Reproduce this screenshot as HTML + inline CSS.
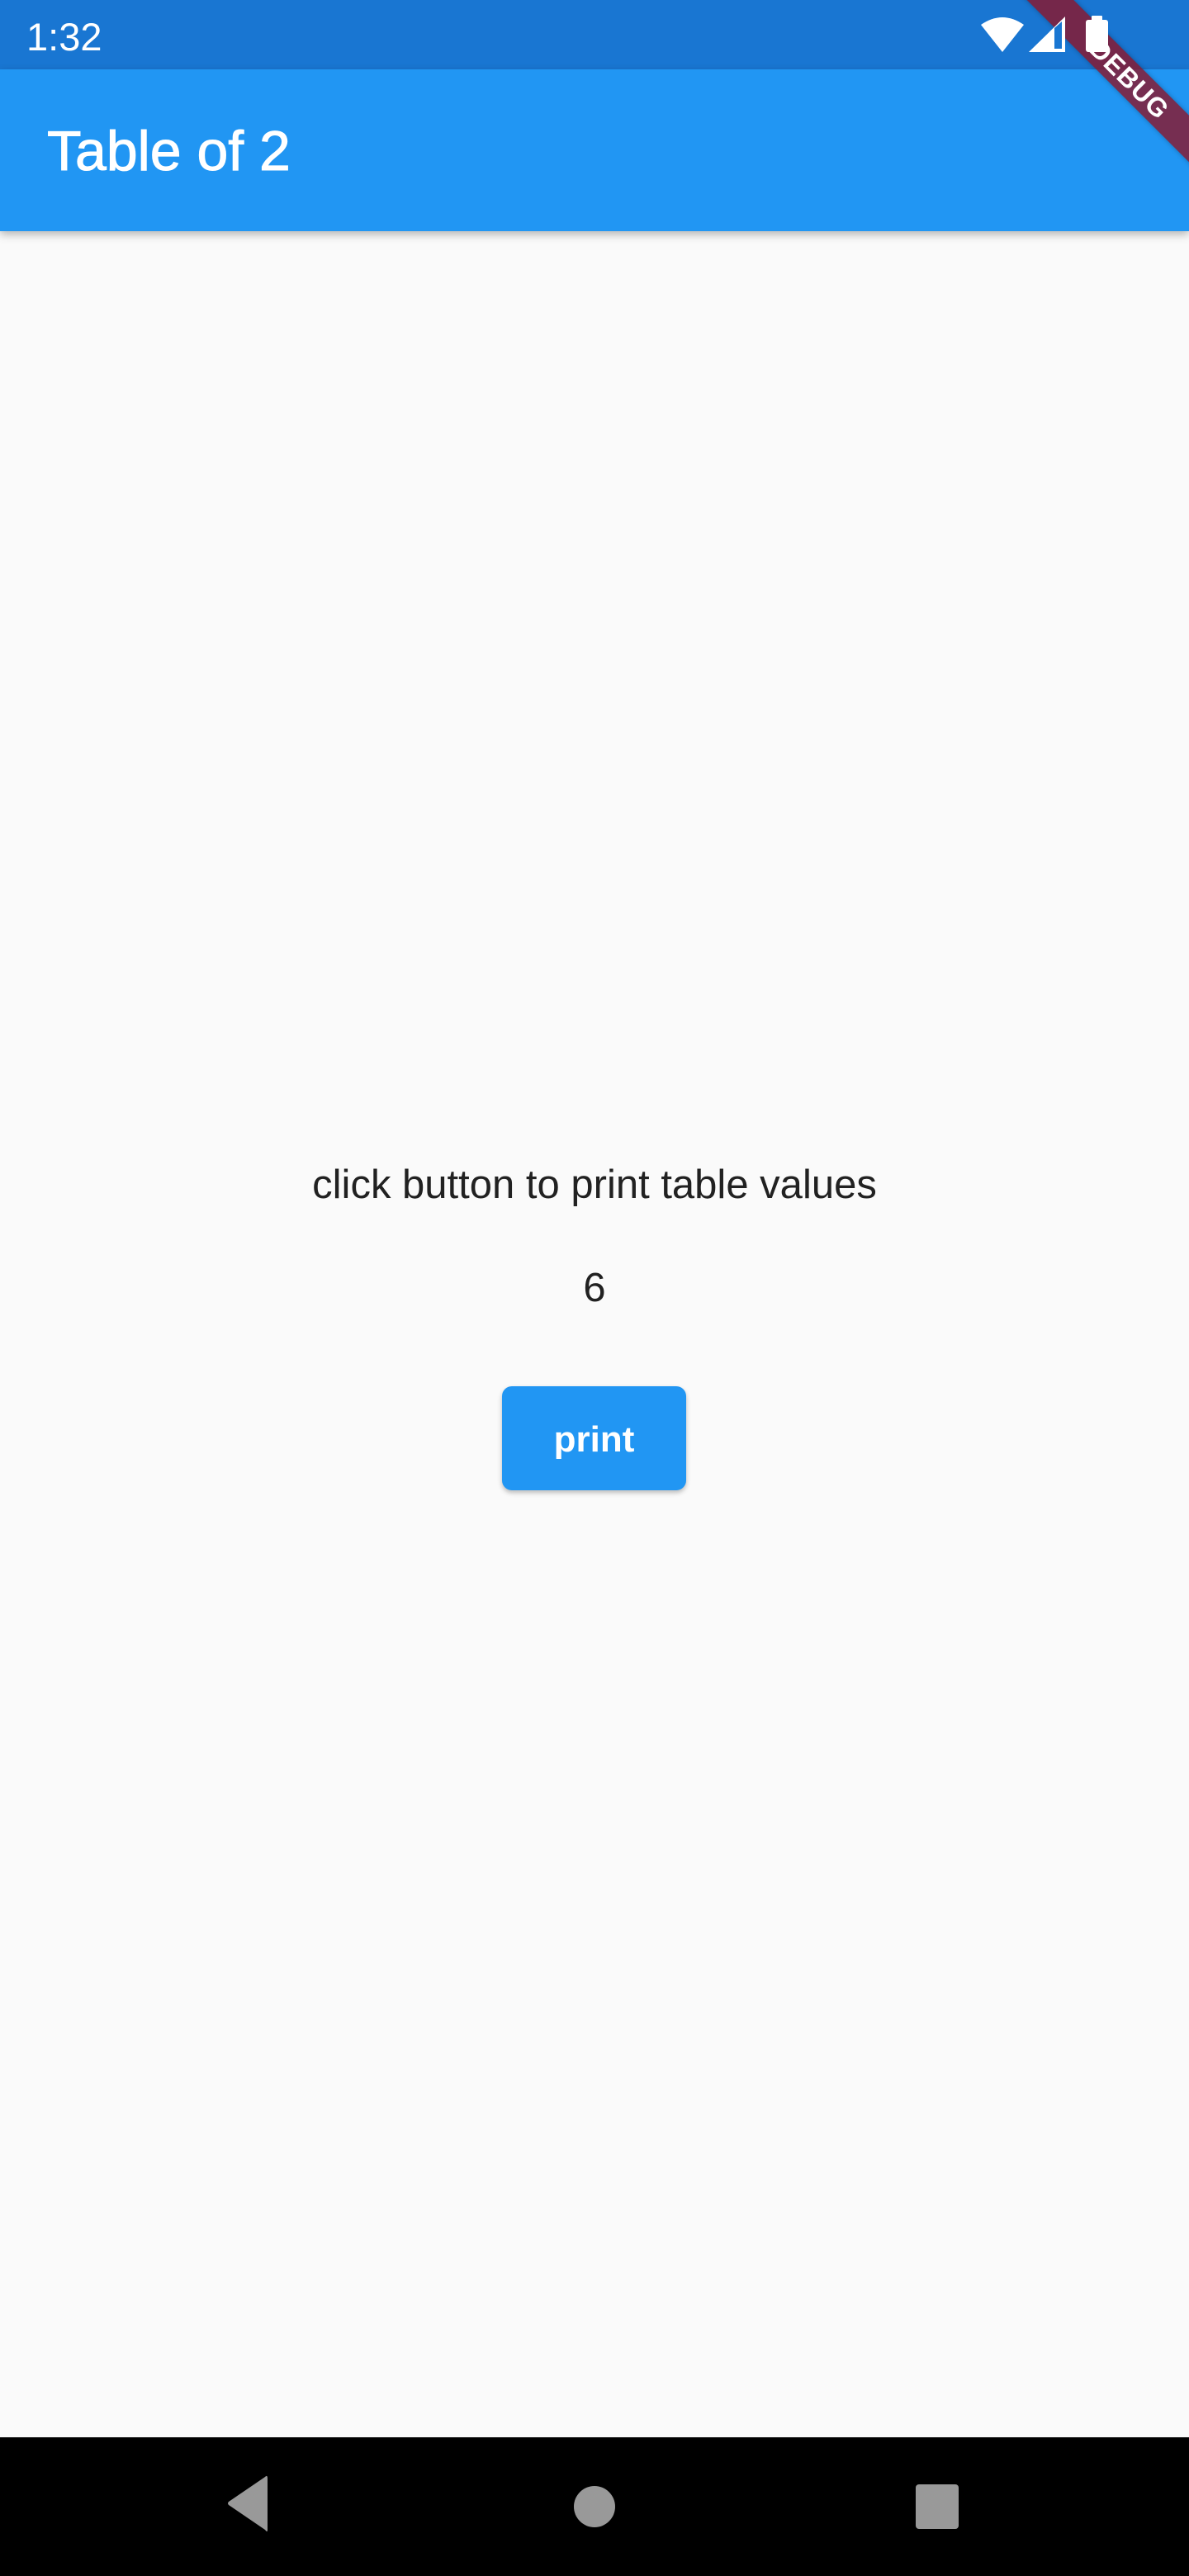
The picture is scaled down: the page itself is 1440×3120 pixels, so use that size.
<!DOCTYPE html>
<html><head><meta charset="utf-8"><style>
html,body{margin:0;padding:0;}
body{width:1440px;height:3120px;background:#fafafa;position:relative;overflow:hidden;font-family:"Liberation Sans",sans-serif;}
.t{position:absolute;white-space:nowrap;line-height:1.117;}
#sb{position:absolute;left:0;top:0;width:1440px;height:84px;background:#1976d2;}
#ab{position:absolute;left:0;top:84px;width:1440px;height:196px;background:#2196f3;box-shadow:0 4px 10px rgba(0,0,0,0.28);}
#btn{position:absolute;left:608px;top:1679px;width:223px;height:126px;background:#2196f3;border-radius:12px;box-shadow:0 3px 6px rgba(0,0,0,0.25);}
#nav{position:absolute;left:0;top:2952px;width:1440px;height:168px;background:#000;}
#rib{position:absolute;left:1168px;top:76px;width:400px;height:40px;background:rgba(140,20,40,0.8);transform:rotate(45deg);color:#fff;font-weight:bold;font-size:32px;line-height:40px;text-align:center;letter-spacing:1px;box-shadow:0 0 6px rgba(0,0,0,0.3);}
</style></head><body>
<div id="sb"></div>
<div id="ab"></div>
<div class="t" style="left:32px;top:18.5px;font-size:47px;color:#fff;">1:32</div>
<div class="t" style="left:57px;top:145.5px;font-size:68px;color:#fff;-webkit-text-stroke:1px #fff;">Table of 2</div>
<div id="rib">DEBUG</div>
<svg style="position:absolute;left:1185px;top:18px" width="160" height="48" viewBox="0 0 160 48">
  <path d="M3 12 Q29 -6 55 12 L29 45 Z" fill="#fff"/>
  <path d="M61 45 L105 2 L105 45 Z" fill="#fff"/>
  <path d="M92 16 L101 8 L101 41 L92 41 Z" fill="#1976d2"/>
  <rect x="130" y="6" width="27" height="39" rx="3" fill="#fff"/>
  <rect x="137" y="1" width="13" height="7" rx="1" fill="#fff"/>
</svg>
<div class="t" style="left:0;width:1440px;text-align:center;top:1407.7px;font-size:49px;color:#212121;">click button to print table values</div>
<div class="t" style="left:0;width:1440px;text-align:center;top:1532.7px;font-size:49px;color:#212121;">6</div>
<div id="btn"></div>
<div class="t" style="left:608px;width:223px;text-align:center;top:1719.2px;font-size:44px;font-weight:bold;color:#fff;">print</div>
<div id="nav"></div>
<svg style="position:absolute;left:0;top:2952px" width="1440" height="168" viewBox="0 0 1440 168">
  <path d="M324 56 L324 112 Q324 116 321 112 L277 82 Q275 80 277 78 L321 48 Q324 45 324 50 Z" fill="#999"/>
  <circle cx="720" cy="84" r="25" fill="#999"/>
  <rect x="1109" y="57" width="52" height="54" rx="4" fill="#999"/>
</svg>
</body></html>
